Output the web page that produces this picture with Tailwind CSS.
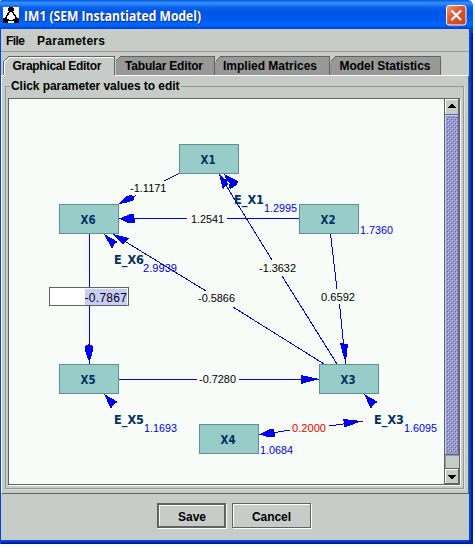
<!DOCTYPE html>
<html lang="en">
<head>
<meta charset="utf-8">
<title>IM1 (SEM Instantiated Model)</title>
<script src="https://cdn.jsdelivr.net/npm/@tailwindcss/browser@4"></script>
</head>
<body class="w-[475px] h-[547px] overflow-hidden bg-[#f7fcf8] font-['Liberation_Sans',Arial,sans-serif] text-black">
<div class="w-[473px] h-[544px] flex flex-col bg-[#0044e0] rounded-tr-[6px] rounded-tl-[3px] overflow-hidden">
  <header class="h-[29px] shrink-0 flex items-center pl-[3px] pr-[6px] bg-[linear-gradient(to_bottom,#0058e6_0px,#3a93ff_3px,#0a63ee_7px,#0054e3_12px,#0058ec_18px,#0066ff_24px,#0060f8_26px,#0040c4_29px)]">
    <svg class="w-4 h-4 shrink-0 mt-[1px]" viewBox="0 0 16 16" shape-rendering="crispEdges">
      <path fill="#fff" d="M0 0h16v16H0z"/>
      <path d="M6 0h4v1h1v3h-1v1H6V4H5V1h1zM0 11h4v1h2v2H5v2H0zM16 11h-4v1h-2v2h1v2h5z"/>
      <path d="M7 4L2.500 11M9 4l4.500 7M5 13.500h6" stroke="#000" stroke-width="1.500" fill="none"/>
    </svg>
    <h1 class="flex-1 pl-[5px] whitespace-nowrap text-white font-bold text-[13px] leading-none [text-shadow:1px_1px_0_#0a2a8c]"><svg class="block overflow-visible" width="178" height="16"><text x="0" y="14" textLength="177" lengthAdjust="spacingAndGlyphs" fill="#fff" class="font-['Open_Sans'] font-bold text-[14px]">IM1 (SEM Instantiated Model)</text></svg></h1>
    <svg class="w-[21px] h-[21px] shrink-0 mt-[2px]" viewBox="0 0 21 21">
      <defs><linearGradient id="c" x2="1" y2="1"><stop stop-color="#f09a80"/><stop offset=".4" stop-color="#e25a34"/><stop offset="1" stop-color="#c43c10"/></linearGradient></defs>
      <rect x=".5" y=".5" width="19.500" height="19.500" rx="2.500" fill="url(#c)" stroke="#fff"/>
      <path d="M5.500 5.500l9.500 9.500M15 5.500L5.500 15" stroke="#fff" stroke-width="2.200"/>
    </svg>
  </header>
  <div class="flex-1 min-h-0 flex flex-col ml-px mr-1 mb-1 bg-[#c8ccc8] shadow-[0_2px_0_#0044e0,2px_0_0_#0044e0,0_4px_0_#001c9c,4px_4px_0_#001c9c]">
    <nav class="h-[23px] shrink-0 border-b border-[#989898] flex items-center pl-[5px] gap-3 text-[12px] font-bold leading-none">
      <svg class="overflow-visible" width="19" height="14"><text y="12" textLength="19">File</text></svg>
      <svg class="overflow-visible" width="68" height="14"><text y="12" textLength="68">Parameters</text></svg>
    </nav>
    <svg class="shrink-0 mt-1 block text-[12px] font-bold" width="468" height="20" viewBox="1 56 468 20" shape-rendering="crispEdges">
      <path d="M120.500 56.500h94v19h-99V61.500zM220.500 56.500h109v19H215V62zM335.500 56.500h105v19H330V62z" fill="#989898"/>
      <path d="M115.500 61.500l5-5h94v18.500M215.500 61.500l5-5h109v18.500M330.500 61.500l5-5h105M440.500 58v17M3.500 75V61.500l5-5h106V75" fill="none" stroke="#606460"/>
      <path d="M4 76V62l5-4.500h105V76z" fill="#c8ccc8"/>
      <path d="M4.500 75V62l5-4.500h104" fill="none" stroke="#fff"/>
      <path d="M1 75.500h3M115 75.500h353" stroke="#fff"/>
      <g><text x="12.500" y="70" textLength="89">Graphical Editor</text><text x="125" y="70" textLength="78">Tabular Editor</text><text x="223" y="70" textLength="94">Implied Matrices</text><text x="339.500" y="70" textLength="91">Model Statistics</text></g>
    </svg>
    <main class="h-[418px] shrink-0 w-[468px] border-l border-l-white border-r border-r-[#606460] border-b border-b-[#606460]">
      <fieldset class="w-[459px] h-[410px] ml-[3px] mt-[3px] border border-[#989898] shadow-[1px_1px_0_#dfe3df]">
        <legend class="ml-1 px-[1px] h-[14px] text-[12px] font-bold leading-none"><svg class="block overflow-visible" width="169" height="14"><text y="11" textLength="168.500">Click parameter values to edit</text></svg></legend>
        <div class="mt-[5px] ml-[2px] w-[452px] h-[387px] flex border border-[#606460] shadow-[1px_1px_0_#fff] bg-[#f7fcf8]">
          <svg class="block shrink-0" width="435" height="385" viewBox="9 99 435 385" font-family="Liberation Sans, Arial, sans-serif">
            <g stroke="#0000f0" stroke-width="1" shape-rendering="crispEdges" fill="none">
              <path d="M179 173.500L164 181M136 195.500L119 204M299 218.500H227M187 218.500H119M89.500 234V364M119 379.500h78M239 379.500h80M330.500 234l6.500 55M339.500 304l6 60M337 364l-55-88M272 260L219 174M324 364l-91-57M206 291L113 234M259 435l31-5M329 426l34-5"/>
            </g>
            <g fill="#0000f0" shape-rendering="crispEdges">
              <path d="M119 204l6-7 5-2 4 1v4l-5 2zM119 218.500l10-4 5-1 1 9-6 1zM89.500 363l-4-11-1-6 4-2 5 2-1 6zM319 379l-18 5v-9zM346 363l-4-12-2-8 8 1-1 8zM219 174l4 16 3-5 5-1zM224 174l14 7-1 4-7 4zM113 234l16 4-3 3-3 4zM104 234l14 8-3 1-3 6zM104 394l14 8-4 2-3 5zM364 394l14 8-4 2-3 5zM259 434.500l10-5 5-1 1 8-5 1zM362 421l-13 5-5 1v-4l-1-4z"/>
            </g>
            <g fill="#98ccc8" stroke="#60908e" shape-rendering="crispEdges">
              <rect x="179.500" y="144.500" width="59" height="29"/><rect x="59.500" y="204.500" width="59" height="29"/><rect x="299.500" y="204.500" width="59" height="29"/><rect x="59.500" y="364.500" width="59" height="29"/><rect x="319.500" y="364.500" width="59" height="29"/><rect x="199.500" y="424.500" width="59" height="29"/>
            </g>
            <g class="font-['DejaVu_Sans'] font-bold text-[12.5px]" fill="#003060">
              <text x="200.500" y="164" textLength="15" lengthAdjust="spacingAndGlyphs">X1</text>
              <text x="80.500" y="224" textLength="15" lengthAdjust="spacingAndGlyphs">X6</text>
              <text x="320.500" y="224" textLength="15" lengthAdjust="spacingAndGlyphs">X2</text>
              <text x="80.500" y="384" textLength="15" lengthAdjust="spacingAndGlyphs">X5</text>
              <text x="340.500" y="384" textLength="15" lengthAdjust="spacingAndGlyphs">X3</text>
              <text x="220.500" y="444" textLength="15" lengthAdjust="spacingAndGlyphs">X4</text>
              <text x="234" y="204" textLength="30" lengthAdjust="spacingAndGlyphs">E_X1</text>
              <text x="114" y="264" textLength="30" lengthAdjust="spacingAndGlyphs">E_X6</text>
              <text x="114" y="424" textLength="30" lengthAdjust="spacingAndGlyphs">E_X5</text>
              <text x="374" y="424" textLength="30" lengthAdjust="spacingAndGlyphs">E_X3</text>
            </g>
            <g font-size="10.500">
              <text x="130" y="192" textLength="36.500" lengthAdjust="spacingAndGlyphs">-1.1171</text>
              <text x="191" y="223" textLength="33" lengthAdjust="spacingAndGlyphs">1.2541</text>
              <text x="259" y="272" textLength="37" lengthAdjust="spacingAndGlyphs">-1.3632</text>
              <text x="321" y="301" textLength="34" lengthAdjust="spacingAndGlyphs">0.6592</text>
              <text x="198" y="302" textLength="37" lengthAdjust="spacingAndGlyphs">-0.5866</text>
              <text x="199" y="383" textLength="37" lengthAdjust="spacingAndGlyphs">-0.7280</text>
              <text x="292" y="432" textLength="34" lengthAdjust="spacingAndGlyphs" fill="#f00000">0.2000</text>
              <g fill="#0000e8"><text x="264" y="212" textLength="33" lengthAdjust="spacingAndGlyphs">1.2995</text><text x="360" y="234" textLength="33" lengthAdjust="spacingAndGlyphs">1.7360</text><text x="143" y="272" textLength="34" lengthAdjust="spacingAndGlyphs">2.9939</text><text x="144" y="432" textLength="33" lengthAdjust="spacingAndGlyphs">1.1693</text><text x="404" y="432" textLength="33" lengthAdjust="spacingAndGlyphs">1.6095</text><text x="260" y="454" textLength="33" lengthAdjust="spacingAndGlyphs">1.0684</text></g>
            </g>
            <g shape-rendering="crispEdges"><path d="M49 287h80v19H49z" fill="#fff"/><path d="M49.500 287.500h79v18h-79z" fill="none" stroke="#606460"/><path d="M85 289h42v16H85z" fill="#c8ccf8"/></g>
            <text x="84.500" y="302" font-size="12" textLength="42.500">-0.7867</text>
          </svg>
          <svg class="block shrink-0" width="15" height="385" viewBox="444 99 15 385" shape-rendering="crispEdges">
            <defs><pattern id="p" width="4" height="4" patternUnits="userSpaceOnUse"><path fill="#9898cc" d="M0 0h4v4H0z"/><path fill="#c8ccf8" d="M0 0h1v1H0zM2 2h1v1H2z"/><path fill="#6464a0" d="M1 1h1v1H1zM3 3h1v1H3z"/></pattern></defs>
            <path fill="#c8ccc8" d="M444 99h15v385h-15z"/>
            <path fill="#9898cc" d="M445 114h14v341h-14z"/><path fill="url(#p)" d="M447 117h11v335h-11z"/>
            <path d="M445.500 455V115.500H459" fill="none" stroke="#c8ccf8"/><path d="M445 114.500h14M445 454.500h14M458.500 114v341" stroke="#606498"/>
            <path d="M445.500 114V99.500H458M445.500 484V469.500H458" stroke="#fff" fill="none"/>
            <path d="M444.500 99v385M445 468.500h14M458.500 99v15M458.500 469v15M445 483.500h14" stroke="#606460"/>
            <path d="M445.500 456v12M445 455.500h14" stroke="#989898"/>
            <path d="M451 104h2v1h1v1h1v1h1v1h-8v-1h1v-1h1v-1h1zM448 475h8v1h-1v1h-1v1h-1v1h-2v-1h-1v-1h-1v-1h-1z"/>
          </svg>
        </div>
      </fieldset>
    </main>
    <footer class="flex-1 flex justify-start items-start pl-[156px] pt-[9px] gap-[6px] text-[12px] font-bold leading-none">
      <button class="w-[69px] h-[25px] border-2 border-[#606460] shadow-[1px_1px_0_#fff,inset_1px_1px_0_#fff] grid place-items-center"><svg class="overflow-visible" width="28" height="14"><text x="0" y="12" textLength="28">Save</text></svg></button>
      <button class="w-[79px] h-[25px] border border-[#606460] shadow-[1px_1px_0_#fff,inset_1px_1px_0_#fff] grid place-items-center"><svg class="overflow-visible" width="39" height="14"><text x="0" y="12" textLength="39">Cancel</text></svg></button>
    </footer>
  </div>
</div>
</body>
</html>
